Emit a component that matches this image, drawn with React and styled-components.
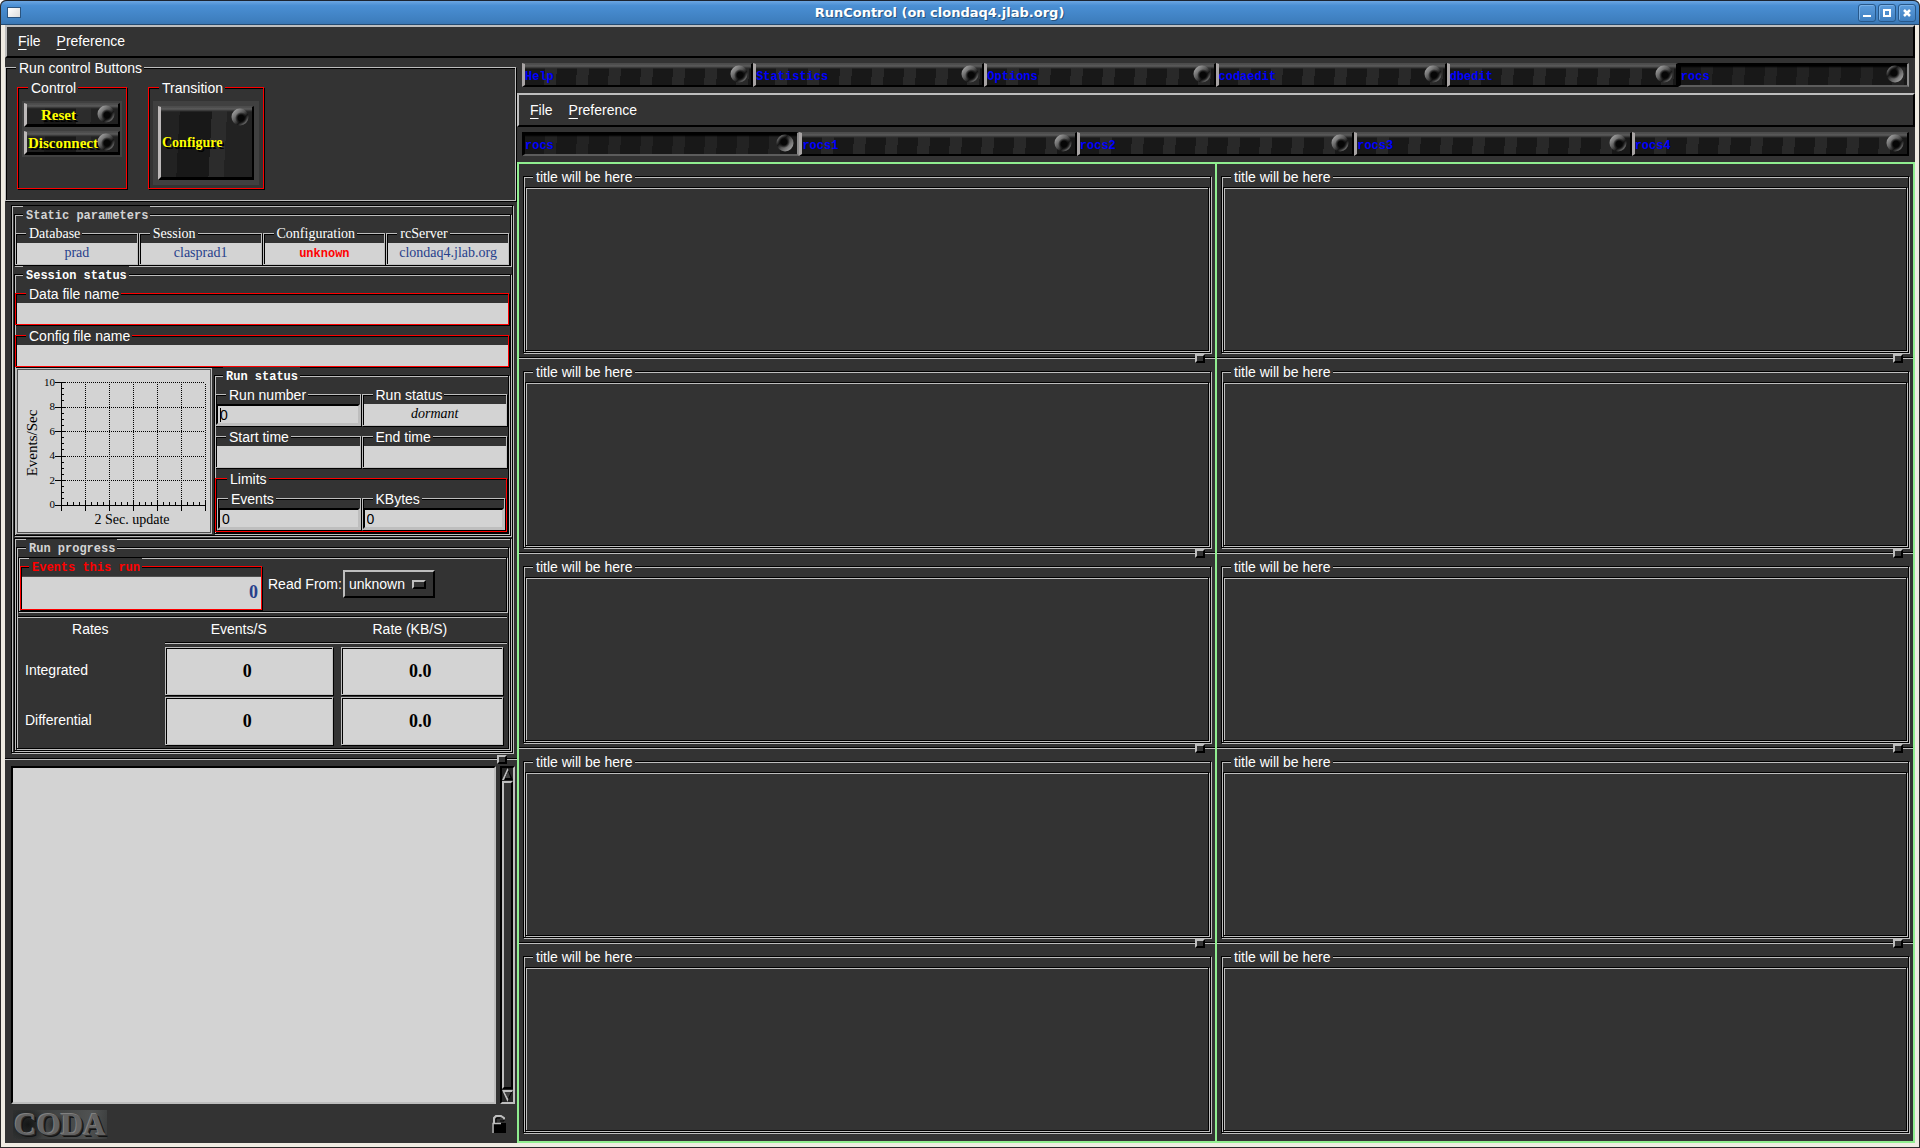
import React from "react";
import styled, { createGlobalStyle, css } from "styled-components";

const sans = '"Liberation Sans", Arial, sans-serif';
const serif = '"Liberation Serif", "Times New Roman", serif';
const mono = '"Liberation Mono", "Courier New", monospace';

const c = {
  bg: "#333333",
  silver: "#bebebe",
  field: "#d3d3d3",
  red: "#ff0000",
  blue: "#27408b",
  green: "#90ee90",
  beige: "#efebe2",
};

const Global = createGlobalStyle`
  *, *::before, *::after { box-sizing: border-box; }
  body { margin: 0; background: #ffffff; font: 14px/18px ${sans}; color: #ffffff; }
  button, input, textarea, select { margin: 0; border-radius: 0; outline: none; }
`;

/* ---------- window shell ---------- */

const Window = styled.div`
  display: flex;
  flex-direction: column;
  min-height: 100vh;
  background: ${c.bg};
  border: 1px solid #2c2a2a;
  border-top: 0;
  border-radius: 6px 6px 0 0;
`;

const TitleBar = styled.header`
  display: flex;
  align-items: center;
  gap: 2px;
  height: 25px;
  padding: 0 3px 0 6px;
  border-top: 1px solid #1c2430;
  border-bottom: 1px solid #23496f;
  border-radius: 6px 6px 0 0;
  background: linear-gradient(#6ca6e2, #4a8fd4 20%, #3f80c0 80%, #3a76b2);
`;

const AppIcon = styled.span`
  width: 14px;
  height: 11px;
  border: 1px solid #2a5480;
  background: linear-gradient(135deg, #ffffff, #dcdcdc);
`;

const Title = styled.h1`
  flex: 1;
  margin: 0;
  font: bold 13px/18px "DejaVu Sans", sans-serif;
  text-align: center;
  text-shadow: 1px 1px 0 #27547f;
`;

const WindowButton = styled.button`
  display: grid;
  place-items: center;
  width: 18px;
  height: 18px;
  padding: 0;
  border: 1px solid #28588a;
  border-radius: 3px;
  background: linear-gradient(#5c9cdc, #3f7fc0);
  box-shadow: inset 1px 1px 0 #79b1e8;
`;

const Body = styled.div`
  flex: 1;
  display: flex;
  flex-direction: column;
  border: solid ${c.beige};
  border-width: 0 4px 4px;
`;

const MenuBar = styled.nav`
  display: flex;
  align-items: center;
  gap: 16px;
  height: ${(p) => (p.$inner ? 34 : 33)}px;
  margin: ${(p) => (p.$inner ? "6px 0 5px" : 0)};
  padding: 0 11px ${(p) => (p.$inner ? 0 : 2)}px;
  border: 2px solid;
  border-color: ${c.silver} #000 #000 ${c.silver};
`;

const MenuButton = styled.button`
  padding: 0;
  border: 0;
  background: none;
  color: #fff;
  font: 14px/18px ${sans};
  &::first-letter {
    text-decoration: underline;
    text-underline-offset: 3px;
  }
`;

const Columns = styled.main`
  flex: 1;
  display: flex;
`;

const LeftPane = styled.div`
  display: flex;
  flex-direction: column;
  width: 512px;
  padding-top: 9px;
`;

const RightPane = styled.div`
  flex: 1;
  display: flex;
  flex-direction: column;
  min-width: 0;
  padding-top: 5px;
`;

/* ---------- etched frames ---------- */

const raised = (color) => css`
  border: 1px solid ${color};
  box-shadow: 1px 1px 0 #000, inset 1px 1px 0 #000;
`;
const sunken = css`
  border: 1px solid #000;
  box-shadow: 1px 1px 0 ${c.silver}, inset 1px 1px 0 ${c.silver};
`;

const Raised = styled.section`
  ${(p) => raised(p.$color || c.silver)}
`;

const Sunken = styled.section`
  ${sunken}
`;

const Caption = styled.div`
  display: block;
  position: relative;
  width: fit-content;
  height: 18px;
  margin: -9px 0 0 10px;
  padding: 0 2px 0 3px;
  background: ${c.bg};
  color: ${(p) => p.$color || "#fff"};
  font: 14px/18px ${sans};
  white-space: nowrap;
  ${(p) => p.$kind === "serif" && css`font: 14px/18px ${serif};`}
  ${(p) => p.$kind === "mono" && css`
    margin-left: 8px;
    font: bold 12px/20px ${mono};
  `}
  ${(p) => p.$kind === "panel" && css`margin-left: 8px;`}
`;

/* ---------- run control ---------- */

const RunControlFrame = styled(Raised)`
  height: 134px;
  margin-right: 1px;
`;

const Groups = styled.div`
  display: flex;
  gap: 21px;
  margin: 10px 0 0 11px;
`;

const Group = styled(Raised)`
  width: ${(p) => p.$width}px;
  height: 102px;
`;

const ButtonTray = styled.div`
  display: flex;
  flex-direction: column;
  gap: 4px;
  margin: 4px 4px 0;
  padding: ${(p) => p.$pad}px;
  background: #404040;
`;

const sheen = "linear-gradient(#4a4a4a, #5c5c5c 2px, #303030 4px, transparent 5px)";

const LampButton = styled.button`
  display: flex;
  align-items: center;
  justify-content: ${(p) => (p.$center ? "center" : "flex-start")};
  position: relative;
  width: 100%;
  height: ${(p) => (p.$big ? 74 : 24)}px;
  padding: 2px ${(p) => (p.$center ? 28 : 0)}px 0 ${(p) => (p.$center ? 0 : 1)}px;
  border: solid;
  border-width: 1px 2px 3px 3px;
  border-color: #4c4c4c #000 #000 #bdb9b9;
  color: #ffff00;
  font: bold ${(p) => (p.$big ? 14 : 15)}px/18px ${serif};
  text-shadow: 2px 2px 0 #000;
  white-space: nowrap;
  background:
    ${sheen},
    linear-gradient(93deg, #222 0 20%, #181818 20% 54%, #2c2c2c 54% 70%, #222 70%);
`;

const LampSvg = styled.svg`
  position: absolute;
  top: 1px;
  right: 3px;
`;

const TabRow = styled.div`
  display: flex;
  padding: 0 6px 0 5px;
`;

const TabButton = styled.button`
  position: relative;
  flex: 1;
  height: 24px;
  padding: 4px 0 0;
  border: solid;
  border-width: 1px 2px 2px 3px;
  border-color: #4c4c4c #000 #000 #a8a4a4;
  color: #0000ff;
  font: bold 12px/16px ${mono};
  text-align: left;
  background: ${sheen}, repeating-linear-gradient(93deg, #181818 0 20px, #292929 20px 32px);
  ${(p) =>
    p.$on &&
    css`
      border-color: #000 #8c8c8c #5c5c5c #000;
      background:
        linear-gradient(#000 2px, transparent 4px),
        repeating-linear-gradient(93deg, #181818 0 20px, #232323 20px 32px);
    `}
`;

/* ---------- status ---------- */

const StatusFrame = styled(Sunken)`
  margin: 4px 4px 0 6px;
  padding: 8px 1px 1px 2px;
`;

const Stack = styled.div`
  display: flex;
  flex-direction: column;
  gap: 10px;
  margin-top: ${(p) => p.$top || 9}px;
`;

const Cells = styled.div`
  display: grid;
  grid-template-columns: repeat(${(p) => p.$n}, 1fr);
  gap: 1px;
  padding-right: 1px;
`;

const StaticCells = styled(Cells)`
  margin-top: 9px;
`;

const SessionFrame = styled(Sunken)`
  margin-top: 8px;
  padding: 0 1px 1px 0;
`;

const Value = styled.output`
  display: block;
  height: 21px;
  margin-left: 1px;
  background: ${c.field};
  color: ${(p) => p.$color || c.blue};
  font: 14px/20px ${serif};
  text-align: center;
  ${(p) => p.$italic && css`font-style: italic; color: #000;`}
  ${(p) => p.$mono && css`font: bold 12px/22px ${mono};`}
`;

const TextField = styled.input`
  display: block;
  width: 100%;
  height: 21px;
  padding: 1px 0 0 2px;
  border: 2px solid;
  border-color: #000 ${c.silver} ${c.silver} #000;
  background: ${c.field};
  color: #000;
  font: 14px/16px ${sans};
  ${(p) => p.$caret && css`background: linear-gradient(#000, #000) 2px 2px / 1px 14px no-repeat ${c.field};`}
`;

const MonitorRow = styled.div`
  display: flex;
  gap: 2px;
`;

const ChartBox = styled.div`
  flex: 0 0 196px;
  margin: 1px 0 0 1px;
  border: 1px solid ${c.silver};
  box-shadow: inset 1px 1px 0 #505050, inset -1px -1px 0 #505050;
  background: ${c.field};
  svg { display: block; }
`;

const RunStatusFrame = styled(Sunken)`
  flex: 1;
  margin-top: 8px;
`;

const LimitsFrame = styled(Raised)`
  margin-right: 1px;
  padding: 0 0 1px 1px;
`;

/* ---------- progress ---------- */

const ProgressOuter = styled(Sunken)`
  margin-top: 2px;
  padding: 8px 1px 1px;
`;

const ProgressFrame = styled(Sunken)`
  padding: 0 1px 3px;
`;

const ReadoutFrame = styled(Sunken)`
  display: flex;
  align-items: center;
  gap: 6px;
  padding: 8px 1px 1px;
`;

const EventsFrame = styled(Raised)`
  width: 242px;
`;

const EventsValue = styled(Value)`
  height: 33px;
  padding-right: 3px;
  border-top: 1px solid #505050;
  font: bold 18px/30px ${serif};
  text-align: right;
`;

const ReadLabel = styled.label`
  margin-top: -8px;
`;

const SelectWrap = styled.div`
  display: flex;
  align-items: center;
  position: relative;
  margin: -8px 0 0 -5px;
`;

const Select = styled.select`
  appearance: none;
  width: 92px;
  height: 28px;
  padding: 0 0 0 4px;
  border: 2px solid;
  border-color: ${c.silver} #000 #000 ${c.silver};
  background: ${c.bg};
  color: #fff;
  font: 14px/18px ${sans};
`;

const SelectMark = styled.span`
  position: absolute;
  right: 9px;
  width: 14px;
  height: 9px;
  border: 2px solid;
  border-color: ${c.silver} #000 #000 ${c.silver};
  pointer-events: none;
`;

const RateTable = styled.table`
  width: 100%;
  margin-top: 4px;
  border-top: 1px solid #000;
  box-shadow: inset 0 1px 0 ${c.silver};
  border-spacing: 0;
  table-layout: fixed;
  th { padding: 0; font-weight: normal; }
  thead th { height: 27px; padding: 0 2px 3px 0; }
  thead th + th {
    padding: 0 28px 2px 0;
    border-bottom: 1px solid ${c.silver};
    box-shadow: inset 0 -1px 0 #000;
  }
  tbody th { padding-left: 7px; text-align: left; }
  td { height: 50px; padding: 3px 8px 0 0; }
  tr + tr td { padding-top: 2px; }
  td + td { padding-right: 4px; }
`;

const RateValue = styled.output`
  display: block;
  height: 48px;
  padding-right: 3px;
  ${raised(c.silver)}
  background: ${c.field};
  color: #000;
  font: bold 18px/46px ${serif};
  text-align: center;
`;

/* ---------- sash, log, footer ---------- */

const Sash = styled.div`
  position: relative;
  height: 9px;
  margin: ${(p) => p.$gap || 0}px 0;
  background: linear-gradient(transparent 3px, #000 3px 4px, ${c.silver} 4px 5px, transparent 5px);
  &::after {
    content: "";
    position: absolute;
    top: 0;
    right: 10px;
    width: 10px;
    height: 9px;
    border: 2px solid;
    border-color: ${c.silver} #000 #000 ${c.silver};
    background: ${c.bg};
  }
`;

const LogRow = styled.div`
  flex: 1;
  display: flex;
  gap: 4px;
  padding: 0 2px 0 6px;
`;

const Log = styled.textarea`
  flex: 1;
  min-width: 0;
  padding: 4px;
  border: 2px solid;
  border-color: #000 ${c.silver} ${c.silver} #000;
  background: ${c.field};
  color: #000;
  font: 12px/16px ${mono};
  resize: none;
`;

const Scrollbar = styled.div`
  display: flex;
  flex-direction: column;
  width: 15px;
  border: 2px solid;
  border-color: #000 ${c.silver} ${c.silver} #000;
  background: #262626;
  svg { flex: none; }
`;

const Thumb = styled.div`
  flex: 1;
  margin: 1px 0;
  border: 2px solid;
  border-color: ${c.silver} #000 #000 ${c.silver};
  background: ${c.bg};
`;

const Footer = styled.footer`
  display: flex;
  align-items: center;
  justify-content: space-between;
  height: 39px;
  padding: 1px 11px 0 8px;
`;

const Logo = styled.div`
  width: 94px;
  height: 29px;
  background:
    radial-gradient(circle at 16% 50%, #141616, transparent 24%),
    radial-gradient(circle at 46% 50%, #1c1e1e, transparent 18%),
    linear-gradient(100deg, #2e3030, #444646 50%, #505252 80%, #3a3c3c);
  color: #626262;
  font: bold 31px/30px ${serif};
  text-align: center;
  text-shadow: -1px -1px 0 #808080, 1px 1px 0 #2a2a2a, 2px 2px 0 #121212;
`;

/* ---------- roc panels ---------- */

const PanelGrid = styled.div`
  flex: 1;
  display: grid;
  grid-template-columns: 1fr 1fr;
  gap: 2px;
  margin-top: 6px;
  border: 2px solid ${c.green};
  background: ${c.green};
`;

const PanelColumn = styled.div`
  display: flex;
  flex-direction: column;
  padding: 12px 0 8px;
  background: ${c.bg};
`;

const Panel = styled(Sunken)`
  flex: 1;
  display: flex;
  flex-direction: column;
  margin: 0 4px;
  padding: 0 1px 1px;
  & + div { margin-top: 1px; }
  div + & { margin-top: 8px; }
`;

const PanelBody = styled.div`
  flex: 1;
  margin-top: 1px;
  ${sunken}
`;

/* ---------- drawings ---------- */

const Lamp = ({ on }) => {
  const id = React.useId();
  return (
    <LampSvg width="18" height="18" viewBox="0 0 18 18" aria-hidden="true">
      <defs>
        <linearGradient id={id} x1={on ? 1 : 0} y1={on ? 1 : 0} x2={on ? 0 : 1} y2={on ? 0 : 1}>
          <stop offset="0.1" stopColor="#a8a8a8" />
          <stop offset="0.45" stopColor="#585858" />
          <stop offset="0.65" stopColor="#181818" />
          <stop offset="0.9" stopColor="#808080" />
        </linearGradient>
        <radialGradient id={id + "c"}>
          <stop offset="0.5" stopColor="#060606" />
          <stop offset="1" stopColor="#060606" stopOpacity="0" />
        </radialGradient>
      </defs>
      <circle cx="9" cy="9" r="8.5" fill={`url(#${id})`} />
      <circle cx={on ? 8 : 10} cy={on ? 8 : 10} r="6" fill={`url(#${id}c)`} />
    </LampSvg>
  );
};

const Arrow = ({ down }) => (
  <svg width="11" height="12" viewBox="0 0 11 12" aria-hidden="true">
    {down ? (
      <>
        <path d="M0 0H11L5.500 12Z" fill="#000" />
        <path d="M0 0H11L10 2H3L6.500 9L5.500 12Z" fill={c.silver} />
        <path d="M2.500 2H9L6 8.500Z" fill="#404040" />
      </>
    ) : (
      <>
        <path d="M0 12L5.500 0L11 12Z" fill="#000" />
        <path d="M0 12L5.500 0L6.500 2L2.500 11L2 12Z" fill={c.silver} />
        <path d="M3 10L6 3L8.500 10Z" fill="#404040" />
      </>
    )}
  </svg>
);

const Lock = () => (
  <svg width="14" height="19" viewBox="0 0 14 19" aria-hidden="true">
    <path d="M2 9V3L4 1H9L12 3V5" fill="none" stroke={c.silver} strokeWidth="2" />
    <path d="M4 9V4L5 3H8" fill="none" stroke="#000" />
    <path d="M8 6H12V4" fill="none" stroke="#000" />
    <rect x="0" y="8" width="14" height="10" fill="#000" />
    <path d="M1 18V8.500H9" fill="none" stroke={c.silver} strokeWidth="1.500" />
  </svg>
);

const X0 = 44;
const Y0 = 136;
const STEP_X = 24;
const STEP_Y = 24.5;
const range = (n) => Array.from({ length: n }, (_, i) => i);

const RateChart = () => (
  <svg width="194" height="164" viewBox="0 0 194 164" role="img" aria-label="Events per second">
    <g stroke="#000" shapeRendering="crispEdges" fill="none">
      {range(6).map((i) => (
        <g key={i}>
          {i > 0 && <path strokeDasharray="1 1" d={`M${X0} ${Y0 - i * STEP_Y}H${X0 + 6 * STEP_X}`} />}
          <path d={`M${X0 - 6} ${Y0 - i * STEP_Y}h11`} />
        </g>
      ))}
      {range(7).map((i) => (
        <g key={i}>
          {i > 0 && <path strokeDasharray="1 1" d={`M${X0 + i * STEP_X} ${Y0}V${Y0 - 5 * STEP_Y}`} />}
          <path d={`M${X0 + i * STEP_X} ${Y0 - 5}v11`} />
        </g>
      ))}
      {range(20).map((i) => (
        <path key={i} d={`M${X0} ${Y0 - (i * STEP_Y) / 4}h3`} />
      ))}
      {range(24).map((i) => (
        <path key={i} d={`M${X0 + (i * STEP_X) / 4} ${Y0}v-3`} />
      ))}
      <path d={`M${X0} ${Y0 - 5 * STEP_Y}V${Y0}H${X0 + 6 * STEP_X}`} />
    </g>
    <g fontFamily={serif} fill="#000">
      {range(6).map((i) => (
        <text key={i} x={X0 - 6} y={Y0 + 3 - i * STEP_Y} fontSize="11" textAnchor="end">
          {i * 2}
        </text>
      ))}
      <text x="115" y="155" fontSize="14" textAnchor="middle">2 Sec. update</text>
      <text transform="translate(20 74) rotate(-90)" fontSize="15" textAnchor="middle">Events/Sec</text>
    </g>
  </svg>
);

/* ---------- composed parts ---------- */

const Menu = ({ inner }) => (
  <MenuBar $inner={inner}>
    <MenuButton>File</MenuButton>
    <MenuButton>Preference</MenuButton>
  </MenuBar>
);

const Tabs = ({ names, active }) => (
  <TabRow>
    {names.map((name) => (
      <TabButton key={name} $on={name === active}>
        {name}
        <Lamp on={name === active} />
      </TabButton>
    ))}
  </TabRow>
);

const Readout = ({ label, kind, red, children, ...value }) => (
  <Raised $color={red ? c.red : undefined}>
    <Caption $kind={kind}>{label}</Caption>
    <Value {...value}>{children}</Value>
  </Raised>
);

const Entry = ({ id, label, caret }) => (
  <Raised>
    <Caption as="label" htmlFor={id}>{label}</Caption>
    <TextField id={id} defaultValue="0" $caret={caret} />
  </Raised>
);

const PanelStack = () => (
  <PanelColumn>
    {range(5).map((i) => (
      <React.Fragment key={i}>
        {i > 0 && <Sash />}
        <Panel>
          <Caption $kind="panel">title will be here</Caption>
          <PanelBody />
        </Panel>
      </React.Fragment>
    ))}
  </PanelColumn>
);

export default function App() {
  return (
    <Window>
      <Global />
      <TitleBar>
        <AppIcon />
        <Title>RunControl (on clondaq4.jlab.org)</Title>
        <WindowButton aria-label="Minimize">
          <svg width="10" height="10"><path d="M1 8H9" stroke="#fff" strokeWidth="2" /></svg>
        </WindowButton>
        <WindowButton aria-label="Maximize">
          <svg width="10" height="10"><path d="M2 2H8V8H2Z" stroke="#fff" strokeWidth="2" fill="none" /></svg>
        </WindowButton>
        <WindowButton aria-label="Close">
          <svg width="10" height="10"><path d="M2 2L8 8M8 2L2 8" stroke="#fff" strokeWidth="2.500" /></svg>
        </WindowButton>
      </TitleBar>
      <Body>
        <Menu />
        <Columns>
          <LeftPane>
            <RunControlFrame>
              <Caption>Run control Buttons</Caption>
              <Groups>
                <Group $color={c.red} $width={110}>
                  <Caption>Control</Caption>
                  <ButtonTray $pad={2}>
                    <LampButton $center>Reset<Lamp /></LampButton>
                    <LampButton>Disconnect<Lamp /></LampButton>
                  </ButtonTray>
                </Group>
                <Group $color={c.red} $width={116}>
                  <Caption>Transition</Caption>
                  <ButtonTray $pad={5}>
                    <LampButton $big>Configure<Lamp /></LampButton>
                  </ButtonTray>
                </Group>
              </Groups>
            </RunControlFrame>

            <StatusFrame>
              <Sunken>
                <Caption $kind="mono" $color={c.field}>Static parameters</Caption>
                <StaticCells $n={4}>
                  <Readout kind="serif" label="Database">prad</Readout>
                  <Readout kind="serif" label="Session">clasprad1</Readout>
                  <Readout kind="serif" label="Configuration" $mono $color={c.red}>unknown</Readout>
                  <Readout kind="serif" label="rcServer">clondaq4.jlab.org</Readout>
                </StaticCells>
              </Sunken>

              <SessionFrame>
                <Caption $kind="mono">Session status</Caption>
                <Stack>
                  <Readout red label="Data file name" />
                  <Readout red label="Config file name" />
                </Stack>
                <MonitorRow>
                  <ChartBox><RateChart /></ChartBox>
                  <RunStatusFrame>
                    <Caption $kind="mono">Run status</Caption>
                    <Stack>
                      <Cells $n={2}>
                        <Entry id="run-number" label="Run number" caret />
                        <Readout label="Run status" $italic>dormant</Readout>
                      </Cells>
                      <Cells $n={2}>
                        <Readout label="Start time" />
                        <Readout label="End time" />
                      </Cells>
                      <LimitsFrame $color={c.red}>
                        <Caption>Limits</Caption>
                        <Stack $top={10}>
                          <Cells $n={2}>
                            <Entry id="limit-events" label="Events" />
                            <Entry id="limit-kbytes" label="KBytes" />
                          </Cells>
                        </Stack>
                      </LimitsFrame>
                    </Stack>
                  </RunStatusFrame>
                </MonitorRow>
              </SessionFrame>

              <ProgressOuter>
                <ProgressFrame>
                  <Caption $kind="mono" $color={c.field}>Run progress</Caption>
                  <ReadoutFrame>
                    <EventsFrame $color={c.red}>
                      <Caption $kind="mono" $color={c.red}>Events this run</Caption>
                      <EventsValue>0</EventsValue>
                    </EventsFrame>
                    <ReadLabel htmlFor="read-from">Read From:</ReadLabel>
                    <SelectWrap>
                      <Select id="read-from"><option>unknown</option></Select>
                      <SelectMark />
                    </SelectWrap>
                  </ReadoutFrame>
                  <RateTable>
                    <colgroup>
                      <col width="30%" />
                      <col width="36%" />
                      <col width="34%" />
                    </colgroup>
                    <thead>
                      <tr><th>Rates</th><th>Events/S</th><th>Rate (KB/S)</th></tr>
                    </thead>
                    <tbody>
                      <tr>
                        <th>Integrated</th>
                        <td><RateValue>0</RateValue></td>
                        <td><RateValue>0.0</RateValue></td>
                      </tr>
                      <tr>
                        <th>Differential</th>
                        <td><RateValue>0</RateValue></td>
                        <td><RateValue>0.0</RateValue></td>
                      </tr>
                    </tbody>
                  </RateTable>
                </ProgressFrame>
              </ProgressOuter>
            </StatusFrame>

            <Sash $gap={2} />
            <LogRow>
              <Log readOnly aria-label="Message log" />
              <Scrollbar>
                <Arrow />
                <Thumb />
                <Arrow down />
              </Scrollbar>
            </LogRow>
            <Footer>
              <Logo>CODA</Logo>
              <Lock />
            </Footer>
          </LeftPane>

          <RightPane>
            <Tabs names={["Help", "Statistics", "Options", "codaedit", "dbedit", "rocs"]} active="rocs" />
            <Menu inner />
            <Tabs names={["rocs", "rocs1", "rocs2", "rocs3", "rocs4"]} active="rocs" />
            <PanelGrid>
              <PanelStack />
              <PanelStack />
            </PanelGrid>
          </RightPane>
        </Columns>
      </Body>
    </Window>
  );
}
